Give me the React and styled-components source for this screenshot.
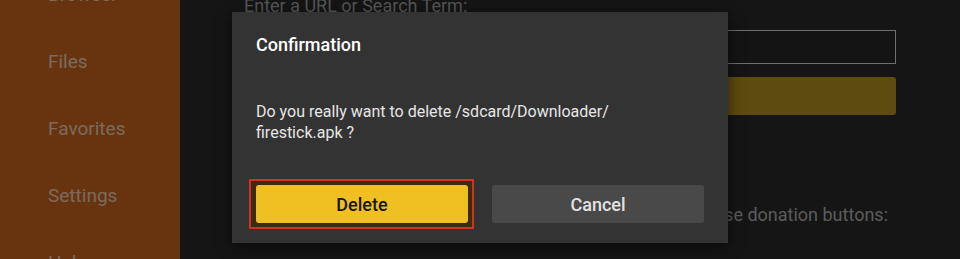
import React from 'react';
import styled, { createGlobalStyle } from 'styled-components';

const GlobalStyle = createGlobalStyle`
    html, body {
        margin: 0;
        padding: 0;
        background: #151515;
        overflow: hidden;
    }
    * {
        box-sizing: border-box;
    }
`

const Screen = styled.div`
    position: relative;
    display: flex;
    width: 960px;
    height: 259px;
    overflow: hidden;
    font-family: 'Roboto', 'Liberation Sans', sans-serif;
`

const Sidebar = styled.nav`
    width: 180px;
    flex-shrink: 0;
    background: #683410;
    display: flex;
    flex-direction: column;
    padding-left: 48px;
`

const NavList = styled.div`
    margin-top: -39px;
    display: flex;
    flex-direction: column;
`

const NavItem = styled.div`
    height: 67px;
    line-height: 67px;
    font-size: 19px;
    color: #7c6b5c;
`

const Main = styled.main`
    flex: 1;
    display: flex;
    flex-direction: column;
    padding: 0 64px;
    background: #151515;
`

const Label = styled.div`
    margin-top: -6px;
    font-size: 18px;
    line-height: 24px;
    color: #565656;
`

const UrlInput = styled.div`
    margin-top: 12px;
    height: 34px;
    border: 1px solid #6e6e6e;
    background: #141414;
`

const GoBar = styled.div`
    margin-top: 13px;
    height: 38px;
    border-radius: 3px;
    background: #5d4b0f;
`

const Donation = styled.div`
    margin-top: 89px;
    text-align: right;
    padding-right: 8px;
    font-size: 18px;
    color: #5c5c5c;
`

const Dialog = styled.div`
    position: absolute;
    left: 232px;
    top: 12px;
    width: 496px;
    height: 231px;
    background: #333333;
    box-shadow: 0 4px 14px rgba(0, 0, 0, 0.55);
    padding: 21px 24px 20px;
    display: flex;
    flex-direction: column;
`

const Title = styled.div`
    font-size: 18px;
    font-weight: 500;
    line-height: 24px;
    color: #ffffff;
`

const Message = styled.div`
    margin-top: 44px;
    font-size: 16px;
    line-height: 21px;
    color: #e6e6e6;
`

const Buttons = styled.div`
    margin-top: auto;
    display: flex;
    align-items: center;
    gap: 24px;
`

const FocusRing = styled.div`
    margin: -6px -6px -6px -7px;
    padding: 4px 4px 4px 5px;
    border: 2px solid #d2321f;
    background: #3a2c12;
    display: flex;
`

const Button = styled.div`
    width: 212px;
    height: 38px;
    border-radius: 3px;
    display: flex;
    align-items: center;
    justify-content: center;
    font-size: 18px;
    font-weight: 500;
    background: ${p => p.primary ? '#f0c022' : '#494949'};
    color: ${p => p.primary ? '#1b1508' : '#e2e2e2'};
`

const App = () => {
    return (
        <Screen>
            <GlobalStyle />
            <Sidebar>
                <NavList>
                    <NavItem>Browser</NavItem>
                    <NavItem>Files</NavItem>
                    <NavItem>Favorites</NavItem>
                    <NavItem>Settings</NavItem>
                    <NavItem>Help</NavItem>
                </NavList>
            </Sidebar>
            <Main>
                <Label>Enter a URL or Search Term:</Label>
                <UrlInput />
                <GoBar />
                <Donation>Please use donation buttons:</Donation>
            </Main>
            <Dialog>
                <Title>Confirmation</Title>
                <Message>
                    Do you really want to delete /sdcard/Downloader/<br />
                    firestick.apk ?
                </Message>
                <Buttons>
                    <FocusRing>
                        <Button primary>Delete</Button>
                    </FocusRing>
                    <Button>Cancel</Button>
                </Buttons>
            </Dialog>
        </Screen>
    );
}

export default App;
